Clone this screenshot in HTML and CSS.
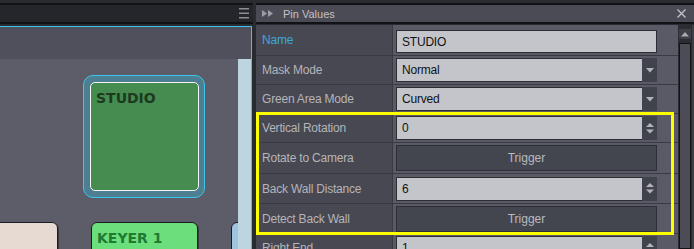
FILE: index.html
```html
<!DOCTYPE html>
<html>
<head>
<meta charset="utf-8">
<link rel="stylesheet" href="styles.css">
</head>
<body>
<div class="app">
  <section class="left">
    <header class="bar bar-left">
      <svg class="hamburger" width="10" height="11" viewBox="0 0 10 11"><rect x="0" y="0" width="10" height="1.5" fill="#8c8d93"/><rect x="0" y="4.5" width="10" height="1.5" fill="#8c8d93"/><rect x="0" y="9" width="10" height="1.5" fill="#8c8d93"/></svg>
    </header>
    <div class="canvas-panel">
      <div class="band"></div>
      <div class="lower">
        <div class="canvas">
          <div class="selected">
            <div class="tile-studio">STUDIO</div>
          </div>
          <div class="tile-row">
            <div class="tile tile-beige"></div>
            <div class="tile tile-keyer">KEYER 1</div>
            <div class="tile tile-blue"></div>
          </div>
        </div>
        <div class="vstrip"></div>
      </div>
    </div>
  </section>

  <section class="right">
    <header class="bar bar-right">
      <svg width="11" height="7" viewBox="0 0 11 7"><polygon points="0,0 5,3.5 0,7" fill="#9d9ea4"/><polygon points="6,0 11,3.5 6,7" fill="#9d9ea4"/></svg>
      <span class="title">Pin Values</span>
      <svg width="9" height="9" viewBox="0 0 9 9"><path d="M0.5 0.5 L8.5 8.5 M8.5 0.5 L0.5 8.5" stroke="#c6c6ca" stroke-width="1.2"/></svg>
    </header>
    <div class="props">
      <div class="rows">
        <div class="row row--name">
          <div class="label label--active">Name</div>
          <div class="value"><div class="field"><span class="text">STUDIO</span></div></div>
        </div>
        <div class="row">
          <div class="label">Mask Mode</div>
          <div class="value"><div class="field"><span class="text">Normal</span><span class="btn"><svg width="8" height="5" viewBox="0 0 8 5"><polygon points="0,0 8,0 4,4.5" fill="#b3b4b9"/></svg></span></div></div>
        </div>
        <div class="row">
          <div class="label">Green Area Mode</div>
          <div class="value"><div class="field"><span class="text">Curved</span><span class="btn"><svg width="8" height="5" viewBox="0 0 8 5"><polygon points="0,0 8,0 4,4.5" fill="#b3b4b9"/></svg></span></div></div>
        </div>
        <div class="row">
          <div class="label">Vertical Rotation</div>
          <div class="value"><div class="field"><span class="text">0</span><span class="btn spin"><svg width="8" height="11" viewBox="0 0 8 11"><polygon points="4,0 8,4 0,4" fill="#b3b4b9"/><polygon points="0,6.5 8,6.5 4,10.5" fill="#b3b4b9"/></svg></span></div></div>
        </div>
        <div class="row row--lg">
          <div class="label">Rotate to Camera</div>
          <div class="value"><div class="trigger">Trigger</div></div>
        </div>
        <div class="row row--md">
          <div class="label">Back Wall Distance</div>
          <div class="value"><div class="field"><span class="text">6</span><span class="btn spin"><svg width="8" height="11" viewBox="0 0 8 11"><polygon points="4,0 8,4 0,4" fill="#b3b4b9"/><polygon points="0,6.5 8,6.5 4,10.5" fill="#b3b4b9"/></svg></span></div></div>
        </div>
        <div class="row row--md">
          <div class="label">Detect Back Wall</div>
          <div class="value"><div class="trigger">Trigger</div></div>
        </div>
        <div class="row">
          <div class="label">Right End</div>
          <div class="value"><div class="field"><span class="text">1</span><span class="btn spin"><svg width="8" height="11" viewBox="0 0 8 11"><polygon points="4,0 8,4 0,4" fill="#b3b4b9"/><polygon points="0,6.5 8,6.5 4,10.5" fill="#b3b4b9"/></svg></span></div></div>
        </div>
      </div>
      <div class="scroll">
        <div class="scroll-up"><svg width="8" height="5" viewBox="0 0 8 5"><polygon points="4,0 8,4.5 0,4.5" fill="#a9aab0"/></svg></div>
        <div class="thumb"></div>
      </div>
    </div>
    <div class="highlight"></div>
  </section>
</div>
</body>
</html>
```

FILE: styles.css
```css
html, body {
  margin: 0;
  padding: 0;
}
body {
  background: #2a2b30;
  width: 694px;
  height: 249px;
  overflow: hidden;
  font-family: "Liberation Sans", Arial, sans-serif;
}
.app {
  display: flex;
  gap: 3px;
  padding-top: 3px;
  height: 246px;
}

/* headers */
.bar {
  height: 17px;
  border-top: 2px solid #111215;
  border-bottom: 2px solid #111215;
  display: flex;
  align-items: center;
  flex: none;
}
.bar-left {
  background: #25262b;
  justify-content: flex-end;
  padding-right: 4px;
}
.bar-right {
  background: #4a4b55;
  padding: 0 8px 0 6px;
  gap: 10px;
}
.title {
  flex: 1;
  color: #c2c2c6;
  font-size: 11px;
}

/* left panel */
.left {
  width: 253px;
  display: flex;
  flex-direction: column;
}
.canvas-panel {
  margin-top: 2px;
  width: 251px;
  border-top: 1px solid #3ec3ea;
  border-right: 1px solid #3ec3ea;
  flex: 1;
  display: flex;
  flex-direction: column;
  min-height: 0;
}
.band {
  height: 32px;
  background: #4f505c;
  flex: none;
}
.lower {
  flex: 1;
  display: flex;
  background: #5c5d69;
  min-height: 0;
  overflow: hidden;
}
.canvas {
  flex: 1;
  overflow: hidden;
  min-width: 0;
}
.vstrip {
  width: 13px;
  background: #bdd4e1;
  flex: none;
}
.selected {
  margin: 16px 0 0 83px;
  width: 122px;
  height: 123px;
  box-sizing: border-box;
  border: 1px solid #3ec5ea;
  border-radius: 10px;
  background: #4d7e91;
  padding: 6px 0 0 6px;
}
.tile-studio {
  width: 109px;
  height: 109px;
  box-sizing: border-box;
  border: 1px solid #f2f5f2;
  border-radius: 5px;
  background: #468c50;
  color: #1c3a20;
  font: bold 14px "DejaVu Sans", Verdana, sans-serif;
  padding: 7px 0 0 5px;
}
.tile-row {
  display: flex;
  gap: 33px;
  margin: 24px 0 0 -49px;
}
.tile {
  flex: none;
  width: 107px;
  height: 60px;
  box-sizing: border-box;
  border: 1px solid #1b1c21;
  border-radius: 6px;
  box-shadow: 1px 1px 0 rgba(0, 0, 0, 0.35);
  font: bold 14px "DejaVu Sans", Verdana, sans-serif;
}
.tile-beige { background: #e6dad3; }
.tile-keyer {
  background: #6bdf7c;
  color: #217a34;
  padding: 7px 0 0 5px;
}
.tile-blue { background: #9ec4df; }

/* right panel */
.right {
  width: 438px;
  position: relative;
  display: flex;
  flex-direction: column;
}
.props {
  margin-top: 1px;
  display: flex;
  flex: 1;
  min-height: 0;
}
.rows {
  width: 422px;
  flex: none;
  overflow: hidden;
}
.row {
  display: flex;
  height: 28px;
  border-bottom: 1px solid #393a42;
}
.row--name { height: 30px; }
.row--lg { height: 30px; }
.row--md { height: 29px; }
.label {
  width: 137px;
  flex: none;
  box-sizing: border-box;
  padding-left: 6px;
  border-right: 1px solid #393a42;
  background: #474852;
  color: #b5b5b9;
  font-size: 12px;
  letter-spacing: -0.2px;
  display: flex;
  align-items: center;
}
.label--active { color: #3ea7dc; }
.value {
  flex: 1;
  background: #595a65;
  padding: 0 21px 0 3px;
  display: flex;
  align-items: center;
}
.row--name .value { padding-top: 3px; }
.field {
  flex: 1;
  height: 24px;
  box-sizing: border-box;
  border: 1px solid #2d2e34;
  background: #c4c5cb;
  display: flex;
}
.row--name .field { height: 23px; }
.text {
  flex: 1;
  padding-left: 5px;
  display: flex;
  align-items: center;
  color: #111214;
  font-size: 12px;
  letter-spacing: -0.2px;
}
.btn {
  width: 15px;
  background: #41434c;
  display: flex;
  align-items: center;
  justify-content: center;
  margin: -1px -1px -1px 0;
}
.trigger {
  flex: 1;
  height: 26px;
  box-sizing: border-box;
  border: 1px solid #2e2f36;
  background: #44464f;
  color: #b9b9be;
  font-size: 12px;
  display: flex;
  align-items: center;
  justify-content: center;
}

/* scrollbar */
.scroll {
  width: 16px;
  flex: none;
  background: #2c2d33;
  display: flex;
  flex-direction: column;
  align-items: center;
  padding-top: 4px;
  gap: 4px;
  border-right: 2px solid #3d3e46;
  box-sizing: border-box;
}
.scroll-up {
  width: 12px;
  height: 10px;
  background: #3e3f47;
  display: flex;
  align-items: center;
  justify-content: center;
}
.thumb {
  width: 12px;
  flex: 1;
  box-sizing: border-box;
  border: 1px solid #111215;
  background: #4b4c56;
}

/* annotation overlay */
.highlight {
  position: absolute;
  left: 0;
  top: 109px;
  width: 418px;
  height: 123px;
  box-sizing: border-box;
  border: 3px solid #ffff00;
  pointer-events: none;
}
```
